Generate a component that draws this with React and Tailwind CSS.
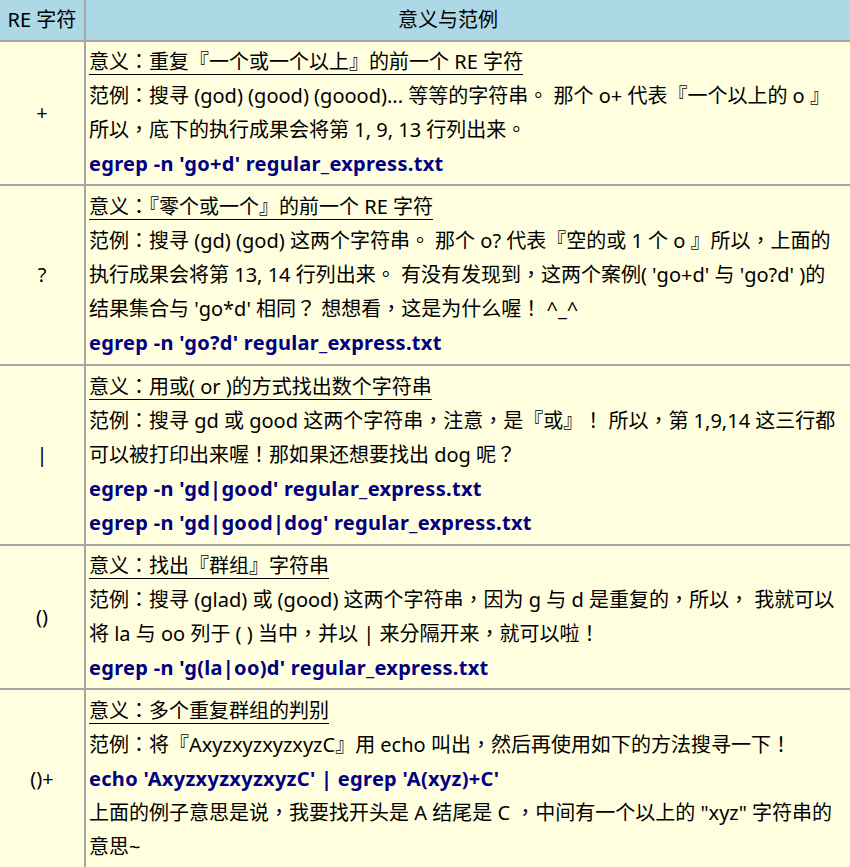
const rows = [
  {
    sym: "+",
    lines: [
      { t: "意义：重复『一个或一个以上』的前一个 RE 字符", k: "u" },
      { t: "范例：搜寻 (god) (good) (goood)... 等等的字符串。 那个 o+ 代表『一个以上的 o 』" },
      { t: "所以，底下的执行成果会将第 1, 9, 13 行列出来。" },
      { t: "egrep -n 'go+d' regular_express.txt", k: "c" },
    ],
  },
  {
    sym: "?",
    lines: [
      { t: "意义：『零个或一个』的前一个 RE 字符", k: "u" },
      { t: "范例：搜寻 (gd) (god) 这两个字符串。 那个 o? 代表『空的或 1 个 o 』所以，上面的" },
      { t: "执行成果会将第 13, 14 行列出来。 有没有发现到，这两个案例( 'go+d' 与 'go?d' )的" },
      { t: "结果集合与 'go*d' 相同？ 想想看，这是为什么喔！ ^_^" },
      { t: "egrep -n 'go?d' regular_express.txt", k: "c" },
    ],
  },
  {
    sym: "|",
    lines: [
      { t: "意义：用或( or )的方式找出数个字符串", k: "u" },
      { t: "范例：搜寻 gd 或 good 这两个字符串，注意，是『或』！ 所以，第 1,9,14 这三行都" },
      { t: "可以被打印出来喔！那如果还想要找出 dog 呢？" },
      { t: "egrep -n 'gd|good' regular_express.txt", k: "c" },
      { t: "egrep -n 'gd|good|dog' regular_express.txt", k: "c" },
    ],
  },
  {
    sym: "()",
    lines: [
      { t: "意义：找出『群组』字符串", k: "u" },
      { t: "范例：搜寻 (glad) 或 (good) 这两个字符串，因为 g 与 d 是重复的，所以， 我就可以" },
      { t: "将 la 与 oo 列于 ( ) 当中，并以 | 来分隔开来，就可以啦！" },
      { t: "egrep -n 'g(la|oo)d' regular_express.txt", k: "c" },
    ],
  },
  {
    sym: "()+",
    lines: [
      { t: "意义：多个重复群组的判别", k: "u" },
      { t: "范例：将『AxyzxyzxyzxyzC』用 echo 叫出，然后再使用如下的方法搜寻一下！" },
      { t: "echo 'AxyzxyzxyzxyzC' | egrep 'A(xyz)+C'", k: "c" },
      { t: "上面的例子意思是说，我要找开头是 A 结尾是 C ，中间有一个以上的 \"xyz\" 字符串的" },
      { t: "意思~" },
    ],
  },
];

const Line = ({ line }) => {
  if (line.k === "u") {
    return (
      <div>
        <span className="underline decoration-1 underline-offset-[5px]">{line.t}</span>
      </div>
    );
  }
  if (line.k === "c") {
    return <div className="font-bold tracking-[0.3px] text-[#000080]">{line.t}</div>;
  }
  return <div>{line.t}</div>;
};

export default function App() {
  return (
    <div
      lang="zh-TW"
      className="w-[850px] h-[867px] overflow-hidden bg-[#ffffe0] text-[20px] leading-[34px] text-black"
      style={{ fontFamily: '"Noto Sans", "Noto Sans CJK TC", sans-serif' }}
    >
      <table className="border-separate border-spacing-0 w-[900px]">
        <thead>
          <tr className="bg-[#add8e6]">
            <th className="w-[85px] h-[41px] border-r border-b border-[#a6a6a6] font-normal text-center whitespace-nowrap">
              RE 字符
            </th>
            <th className="h-[41px] border-l border-b border-[#a6a6a6] font-normal text-center pr-[90px]">
              意义与范例
            </th>
          </tr>
        </thead>
        <tbody>
          {rows.map((row) => (
            <tr key={row.sym}>
              <td className="w-[85px] border-t border-r border-b border-[#a6a6a6] text-center align-middle">
                {row.sym}
              </td>
              <td
                className={
                  row.lines.length > 4
                    ? "border-t border-l border-b border-[#a6a6a6] pl-[3px] py-[4px] whitespace-nowrap align-top"
                    : "border-t border-l border-b border-[#a6a6a6] pl-[3px] py-[3px] whitespace-nowrap align-top"
                }
              >
                {row.lines.map((line, i) => (
                  <Line key={i} line={line} />
                ))}
              </td>
            </tr>
          ))}
        </tbody>
      </table>
    </div>
  );
}
